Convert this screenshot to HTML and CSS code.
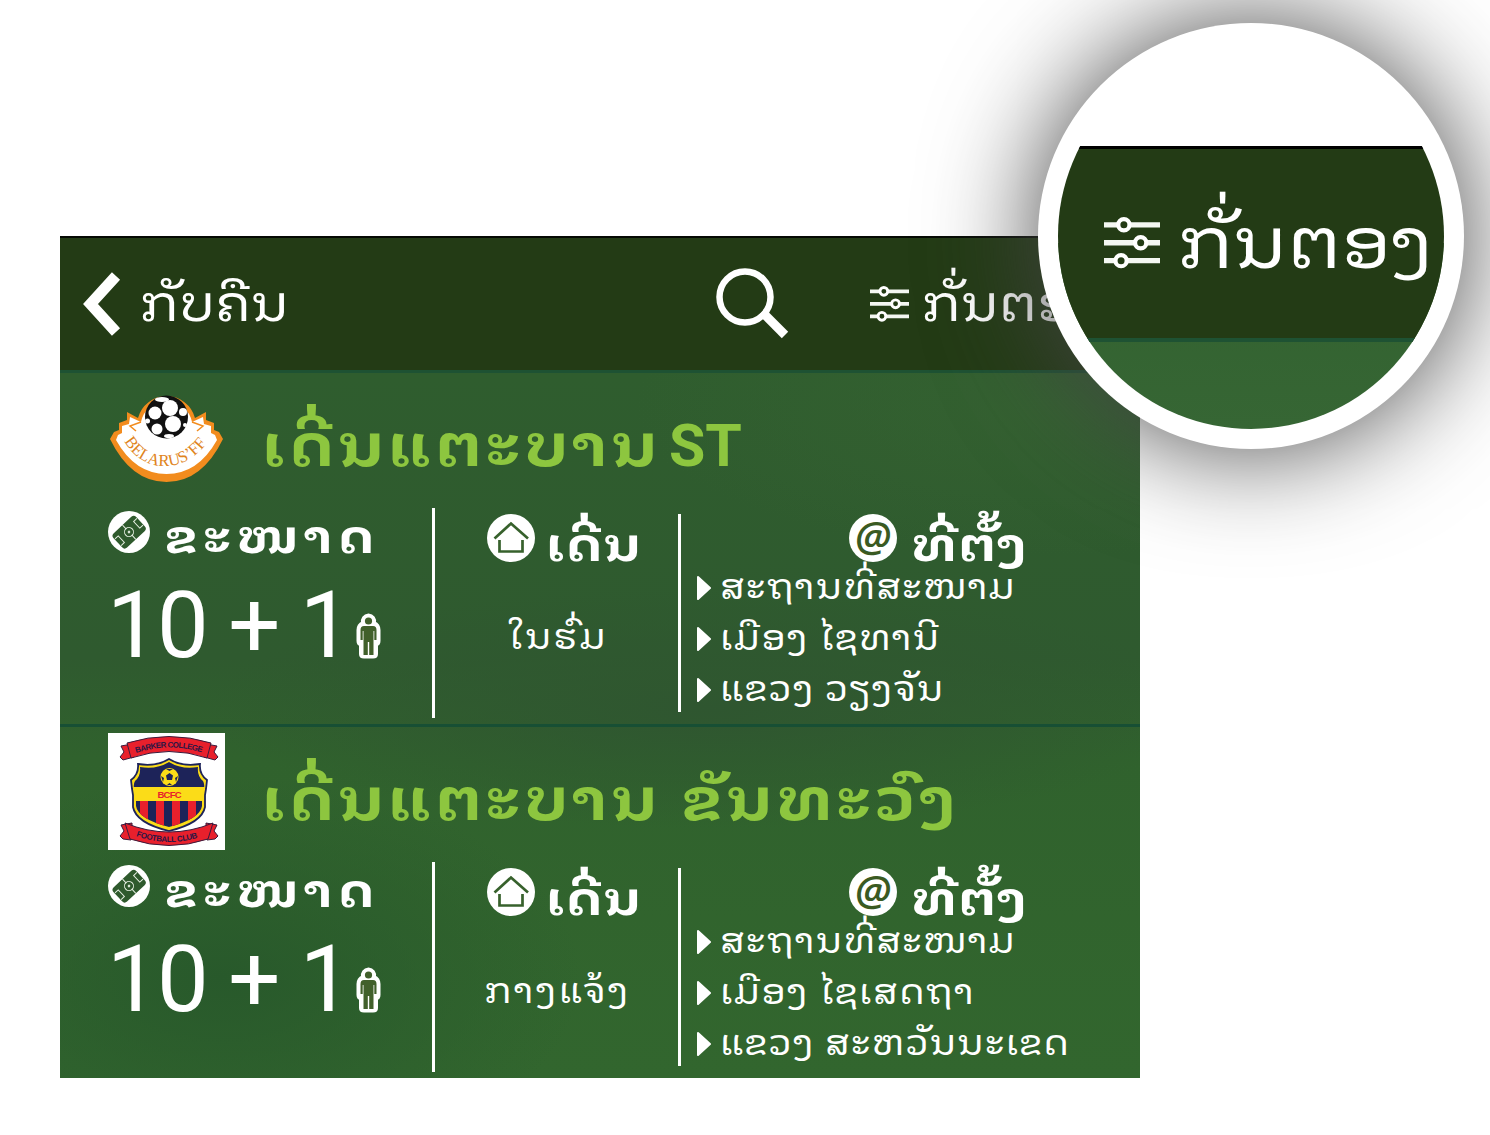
FILE: index.html
```html
<!DOCTYPE html>
<html lang="lo">
<head>
<meta charset="utf-8">
<title>ເດີ່ນແຕະບານ</title>
<link rel="stylesheet" href="styles.css">
</head>
<body>
<svg class="defs" width="0" height="0" aria-hidden="true">
  <defs>
    <symbol id="sliders" viewBox="0 0 40 38">
      <path d="M0 6H40M0 18.800H40M0 31.600H40" stroke="#f4f7f2" stroke-width="3.800" fill="none"/>
      <g fill="#233b15" stroke="#fff" stroke-width="3">
        <circle cx="14.200" cy="6" r="4"/><circle cx="26.200" cy="18.800" r="4"/><circle cx="12.200" cy="31.600" r="4"/>
      </g>
    </symbol>
    <symbol id="pitch" viewBox="0 0 42 42">
      <circle cx="21" cy="21" r="21" fill="#fff"/>
      <g transform="rotate(-43 21 21)">
        <rect x="5.500" y="11.500" width="31" height="19.500" rx="3.500" fill="#2f5a2d"/>
        <g fill="none" stroke="#e6efe2" stroke-width="1">
          <path d="M21 11.500V17M21 25V31"/><circle cx="21" cy="21" r="4.500"/><circle cx="21" cy="21" r=".8"/>
          <path d="M6 16.500H10.500V25.500H6M36 16.500H31.500V25.500H36"/>
        </g>
      </g>
    </symbol>
    <symbol id="house" viewBox="0 0 48 48">
      <circle cx="24" cy="24" r="24" fill="#fff"/>
      <path d="M7.500 24.500L24 9.500L41 24.500M12.500 26V37.500H35.500V26" fill="none" stroke="#37612c" stroke-width="2.700"/>
    </symbol>
    <symbol id="person" viewBox="0 0 25 46">
      <path d="M12.500 2.500A6 6 0 0 1 18 10Q22.500 12 22.500 17V28Q22.500 31 20 31V41Q20 43.500 17 43.500H8Q5 43.500 5 41V31Q2.500 31 2.500 28V17Q2.500 12 7 10A6 6 0 0 1 12.500 2.500Z" fill="#fff" stroke="#fff" stroke-width="4" stroke-linejoin="round"/>
      <g fill="#41602b"><circle cx="12.500" cy="8" r="3.600"/>
      <path d="M8 13H17Q20.500 13 20.500 17V27H18.300V18H17.500V42H13.200V29H11.800V42H7.500V18H6.700V27H4.500V17Q4.500 13 8 13Z"/></g>
    </symbol>
    <symbol id="arrow" viewBox="0 0 14 24">
      <path d="M1 1L13 12L1 23Z" fill="#fff" stroke="#fff" stroke-width="2" stroke-linejoin="round"/>
    </symbol>
  </defs>
</svg>

<main class="screen">
  <header class="bar">
    <svg class="back" viewBox="0 0 38 66"><path d="M33 5L7.500 33L33 61" fill="none" stroke="#fff" stroke-width="11" stroke-linejoin="miter"/></svg>
    <span class="bar-text back-text">ກັບຄືນ</span>
    <svg class="search" viewBox="0 0 74 74"><circle cx="29" cy="30" r="25.500" fill="none" stroke="#fff" stroke-width="6.500"/><path d="M46 45L69 68" stroke="#fff" stroke-width="9"/></svg>
    <svg class="filter"><use href="#sliders"/></svg>
    <span class="bar-text filter-text">ກັ່ນຕອງ</span>
  </header>

  <section class="field">
    <div class="field-head">
      <svg class="logo" viewBox="0 0 117 117">
        <path d="M30 39A29.500 29.500 0 0 1 87 39L98 33V41L106 44V51L111 53L115 60Q94 103 58.500 103T2 60L6 53L11 51V44L19 41V33Z" fill="#f28c1e"/>
        <path d="M33 43A26 26 0 0 1 84 43L95 38L96 45L103 47V54L107 56L109 61Q90 95 58.500 95T8 61L10 56L14 54V47L21 45L22 38Z" fill="#fff"/>
        <path d="M33 43L22 47L28 52M84 43L95 47L89 52" fill="none" stroke="#f28c1e" stroke-width="1.500"/>
        <circle cx="58.500" cy="38" r="21.500" fill="#111"/>
        <g fill="#fff"><circle cx="62" cy="29" r="8"/><circle cx="47" cy="34" r="6.500"/><circle cx="65" cy="45" r="8"/><circle cx="49" cy="50" r="5.500"/><circle cx="75" cy="33" r="4"/><ellipse cx="54" cy="20.500" rx="7" ry="2.500"/><circle cx="39.500" cy="42" r="2.500"/><ellipse cx="61" cy="57" rx="5" ry="2"/><circle cx="77" cy="46" r="2"/></g>
        <path id="belarus-arc" d="M16 62Q31 87 57 87T101 61" fill="none"/>
        <text class="belarus"><textPath href="#belarus-arc" textLength="100">BELARUS’FF</textPath></text>
      </svg>
      <h2 class="title"><span>ເດີ່ນແຕະບານ</span><span class="latin">ST</span></h2>
    </div>
    <div class="cols">
      <div class="col size">
        <div class="label"><svg class="ic-pitch"><use href="#pitch"/></svg><span>ຂະໜາດ</span></div>
        <div class="count"><span>10 + 1</span><svg class="ic-person"><use href="#person"/></svg></div>
      </div>
      <div class="col kind">
        <div class="label"><svg class="ic-round"><use href="#house"/></svg><span>ເດີ່ນ</span></div>
        <div class="kind-value">ໃນຮົ່ມ</div>
      </div>
      <div class="col place">
        <div class="label"><span class="at">@</span><span>ທີ່ຕັ້ງ</span></div>
        <ul class="list">
          <li><svg class="ic-arrow"><use href="#arrow"/></svg><span>ສະຖານທີ່ສະໜາມ</span></li>
          <li><svg class="ic-arrow"><use href="#arrow"/></svg><span>ເມືອງ ໄຊທານີ</span></li>
          <li><svg class="ic-arrow"><use href="#arrow"/></svg><span>ແຂວງ ວຽງຈັນ</span></li>
        </ul>
      </div>
    </div>
  </section>

  <section class="field">
    <div class="field-head">
      <svg class="logo" viewBox="0 0 117 117">
        <rect width="117" height="117" fill="#fff"/>
        <g fill="#e8202c" stroke="#3a1a3c" stroke-width="1">
          <path d="M13 13L24 11V22L26 24L15 27L12 24L16 19Z"/><path d="M109 13L98 11V22L96 24L107 27L110 24L106 19Z"/>
          <path d="M19 10Q61 -3 103 10L99 25Q61 12 23 25Z"/>
          <path d="M13 92L24 90V101L23 107L15 106L12 103L16 98Z"/><path d="M109 92L98 90V101L99 107L107 106L110 103L106 98Z"/>
          <path d="M17 90Q61 108 105 90L100 106Q61 119 22 106Z"/>
        </g>
        <path id="barker-top" d="M28 20Q61 9 96 20" fill="none"/>
        <path id="barker-bottom" d="M28 103Q61 115 95 103" fill="none"/>
        <text class="ribbon"><textPath href="#barker-top" textLength="67">BARKER COLLEGE</textPath></text>
        <text class="ribbon"><textPath href="#barker-bottom" textLength="63">FOOTBALL CLUB</textPath></text>
        <clipPath id="shield"><path d="M32 34Q48 37 61 29Q74 37 90 34Q89 43 95 48Q98 53 94 62V73Q92 86 61 94Q30 86 28 73V62Q24 53 27 48Q33 43 32 34Z"/></clipPath>
        <path d="M30 31Q48 34 61 26Q74 34 92 31Q91 41 99 47L98 56L97 62V74Q94 90 61 98Q28 90 25 74V62L24 56L23 47Q31 41 30 31Z" fill="#fbdc18" stroke="#1d2359" stroke-width="1.800"/>
        <g clip-path="url(#shield)">
          <rect x="22" y="26" width="78" height="28" fill="#1d2359"/><rect x="22" y="54" width="78" height="14" fill="#fbdc18"/>
          <rect x="22" y="68" width="78" height="32" fill="#1d2359"/>
          <path d="M32 68h8v32h-8zM48 68h8v32h-8zM64 68h8v32h-8zM80 68h8v32h-8z" fill="#e8202c"/>
        </g>
        <circle cx="61.500" cy="44" r="9" fill="#fbdc18"/>
        <path d="M61.500 40L65 42.500L64 47H59L58 42.500ZM58 36L61.500 38L65 36ZM53 43L56 45L55 49ZM70 43L67 45L68 49ZM59 52L61.500 50L64 52Z" fill="#1d2359"/>
        <text class="bcfc" x="61.500" y="64.500" textLength="24">BCFC</text>
      </svg>
      <h2 class="title"><span>ເດີ່ນແຕະບານ ຂັນທະວົງ</span></h2>
    </div>
    <div class="cols">
      <div class="col size">
        <div class="label"><svg class="ic-pitch"><use href="#pitch"/></svg><span>ຂະໜາດ</span></div>
        <div class="count"><span>10 + 1</span><svg class="ic-person"><use href="#person"/></svg></div>
      </div>
      <div class="col kind">
        <div class="label"><svg class="ic-round"><use href="#house"/></svg><span>ເດີ່ນ</span></div>
        <div class="kind-value">ກາງແຈ້ງ</div>
      </div>
      <div class="col place">
        <div class="label"><span class="at">@</span><span>ທີ່ຕັ້ງ</span></div>
        <ul class="list">
          <li><svg class="ic-arrow"><use href="#arrow"/></svg><span>ສະຖານທີ່ສະໜາມ</span></li>
          <li><svg class="ic-arrow"><use href="#arrow"/></svg><span>ເມືອງ ໄຊເສດຖາ</span></li>
          <li><svg class="ic-arrow"><use href="#arrow"/></svg><span>ແຂວງ ສະຫວັນນະເຂດ</span></li>
        </ul>
      </div>
    </div>
  </section>
</main>

<aside class="lens">
  <div class="lens-view">
    <div class="lens-bar">
      <svg class="lens-icon"><use href="#sliders"/></svg>
      <span class="lens-text">ກັ່ນຕອງ</span>
    </div>
  </div>
</aside>
</body>
</html>
```
FILE: styles.css
```css
* { box-sizing: border-box; }
html, body { margin: 0; width: 1490px; height: 1135px; overflow: hidden; }
body {
  position: relative;
  padding: 236px 0 0 60px;
  background: #fff;
  color: #fff;
  font-family: Roboto, "Noto Sans Lao Looped", "Phetsarath OT", "Noto Sans Lao", "DejaVu Sans", sans-serif;
  white-space: nowrap;
}
svg { display: block; flex: none; overflow: visible; }
.defs { position: absolute; }

.screen {
  width: 1080px;
  height: 842px;
  border-top: 2px solid #050a03;
  background:
    radial-gradient(ellipse 420px 150px at 92% 20%, #39653380, transparent),
    radial-gradient(ellipse 360px 200px at 15% 88%, #28592b, transparent),
    radial-gradient(ellipse 500px 120px at 60% 56%, #2f5630, transparent),
    linear-gradient(#2f5d2e 16%, #2f5a2f 50%, #30622d 62%, #32662e);
}

.bar {
  display: flex;
  align-items: flex-start;
  height: 135px;
  border-bottom: 3px solid #1e5233;
  background: #233b15;
}
.back { width: 38px; height: 66px; margin: 33px 0 0 23px; }
.bar-text { height: 132px; line-height: 132px; font-size: 50px; transform: scaleX(1.08); transform-origin: left; }
.back-text { width: 132px; margin-left: 19px; }
.search { width: 74px; height: 74px; margin: 29px 0 0 444px; }
.filter { width: 39px; height: 38px; margin: 47px 0 0 80px; }
.filter-text { margin-left: 13px; }

.field { height: 351px; padding-top: 6px; }
.field + .field { height: 354px; border-top: 3px solid #174f34; }
.field-head { display: flex; height: 117px; margin-left: 48px; }
.logo { width: 117px; height: 117px; }
.title {
  display: flex;
  margin: 0 0 0 37px;
  height: 134px;
  line-height: 134px;
  font-size: 58px;
  font-weight: 700;
  color: #8dc63f;
}
.title span { letter-spacing: 3.2px; transform: scaleX(1.115); transform-origin: left; }
.title .latin { margin-left: 49px; font-size: 59px; letter-spacing: 0; transform: none; }
.belarus { font: 16.5px "Liberation Serif", serif; fill: #e08420; }
.ribbon { font: bold 8px "Liberation Sans", sans-serif; fill: #2a1745; }
.bcfc { font: bold 9.5px "Liberation Sans", sans-serif; fill: #e8202c; text-anchor: middle; }

.cols { display: flex; align-items: flex-start; margin-left: 48px; padding-top: 12px; }
.col { height: 210px; }
.size { width: 327px; border-right: 3px solid #fff; padding-top: 3px; }
.kind, .place { margin-top: 6px; height: 198px; }
.kind { width: 246px; border-right: 3px solid #fff; }
.label { display: flex; height: 48px; line-height: 62px; font-size: 46px; font-weight: 700; }
.label span:last-child { margin-left: 14px; letter-spacing: .8px; transform: scaleX(1.14); transform-origin: left; }
.size .label { line-height: 53px; }
.size .label span { letter-spacing: 4.5px; }
.kind .label { margin-left: 52px; }
.kind .label span:last-child { margin-left: 11px; }
.place .label { margin-left: 168px; }
.ic-pitch { width: 42px; height: 42px; }
.ic-round, .at { width: 48px; height: 48px; }
.at {
  border-radius: 50%;
  background: #fff;
  color: #3a5a22;
  font: italic 600 42px/43px "Open Sans", sans-serif;
  text-align: center;
}
.count { display: flex; height: 120px; }
.count span { width: 249px; height: 120px; line-height: 134px; font-size: 92px; letter-spacing: -1.7px; margin-left: -1px; }
.ic-person { width: 25px; height: 46px; margin-top: 54px; }
.kind-value { padding: 50px 0 0 2px; line-height: 50px; font-size: 36px; letter-spacing: 2px; text-align: center; transform: scaleX(1.05); }
.list { margin: 0 0 0 16px; padding: 0; list-style: none; font-size: 36px; line-height: 53px; }
.list li { display: flex; align-items: center; height: 51px; }
.list span { letter-spacing: 1px; transform: scaleX(1.05); transform-origin: left; }
.ic-arrow { width: 14px; height: 24px; margin-right: 9px; }

.lens {
  position: absolute;
  left: 1038px;
  top: 23px;
  width: 426px;
  height: 426px;
  padding: 20px;
  border-radius: 50%;
  background: #fff;
  box-shadow: 0 0 112px #444;
}
.lens-view {
  width: 386px;
  height: 386px;
  padding-top: 103px;
  border-radius: 50%;
  overflow: hidden;
  background: linear-gradient(#fff 200px, #32612f 200px, #366634);
}
.lens-bar {
  display: flex;
  height: 196px;
  padding-left: 46px;
  border-top: 3px solid #000;
  border-bottom: 4px solid #1e5233;
  background: #233b15;
}
.lens-icon { width: 56px; height: 54px; margin-top: 67px; }
.lens-text { margin-left: 18px; line-height: 189px; font-size: 71px; transform: scaleX(1.08); transform-origin: left; }
```
